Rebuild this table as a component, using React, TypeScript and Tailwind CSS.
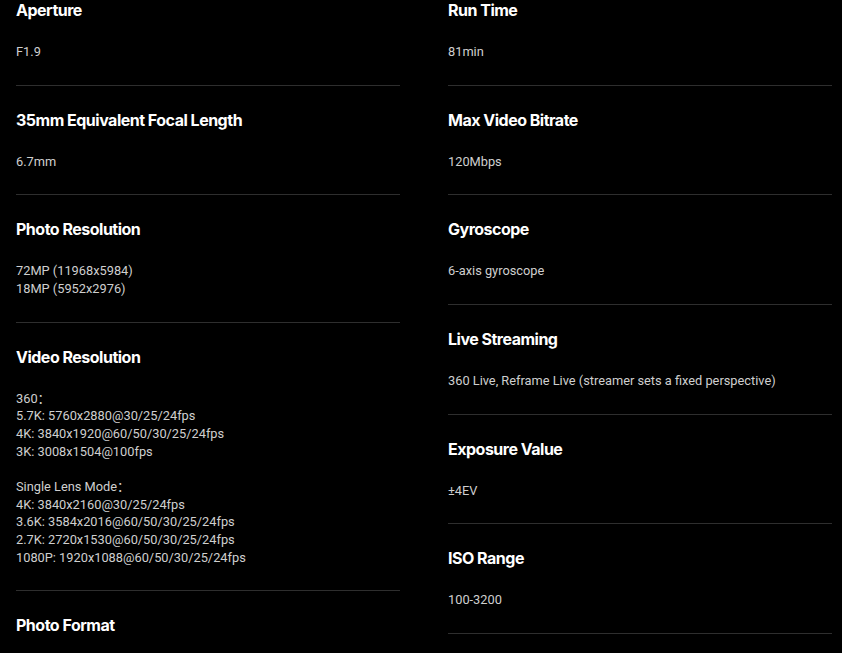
import React from "react";

type Spec = { title: string; lines: string[] };

const left: Spec[] = [
  { title: "Aperture", lines: ["F1.9"] },
  { title: "35mm Equivalent Focal Length", lines: ["6.7mm"] },
  { title: "Photo Resolution", lines: ["72MP (11968x5984)", "18MP (5952x2976)"] },
  {
    title: "Video Resolution",
    lines: [
      "360：",
      "5.7K: 5760x2880@30/25/24fps",
      "4K: 3840x1920@60/50/30/25/24fps",
      "3K: 3008x1504@100fps",
      "",
      "Single Lens Mode：",
      "4K: 3840x2160@30/25/24fps",
      "3.6K: 3584x2016@60/50/30/25/24fps",
      "2.7K: 2720x1530@60/50/30/25/24fps",
      "1080P: 1920x1088@60/50/30/25/24fps",
    ],
  },
  { title: "Photo Format", lines: [] },
];

const right: Spec[] = [
  { title: "Run Time", lines: ["81min"] },
  { title: "Max Video Bitrate", lines: ["120Mbps"] },
  { title: "Gyroscope", lines: ["6-axis gyroscope"] },
  { title: "Live Streaming", lines: ["360 Live, Reframe Live (streamer sets a fixed perspective)"] },
  { title: "Exposure Value", lines: ["±4EV"] },
  { title: "ISO Range", lines: ["100-3200"] },
];

function Section({ s }: { s: Spec }) {
  return (
    <div className="border-b border-[#2e2e2e] pt-[24px] pb-[24px]">
      <div className="text-[16px] leading-[20px] font-bold text-white font-['Inter','Noto_Sans',sans-serif] tracking-[-0.5px]">
        {s.title}
      </div>
      {s.lines.length > 0 && (
        <div className="mt-[23px] text-[12.8px] leading-[17.67px] text-[#cfcfcf] font-['Roboto','Liberation_Sans','Noto_Sans_CJK_SC',sans-serif]">
          {s.lines.map((l, i) => (
            <div key={i} className="h-[17.67px] whitespace-pre">
              {l}
            </div>
          ))}
        </div>
      )}
    </div>
  );
}

export default function App() {
  return (
    <div className="w-[842px] h-[653px] overflow-hidden bg-black">
      <div className="mt-[-24px] pl-4 grid grid-cols-[384px_384px] gap-x-12 items-start">
        <div className="flex flex-col">
          {left.map((s) => (
            <Section key={s.title} s={s} />
          ))}
        </div>
        <div className="flex flex-col">
          {right.map((s) => (
            <Section key={s.title} s={s} />
          ))}
        </div>
      </div>
    </div>
  );
}
